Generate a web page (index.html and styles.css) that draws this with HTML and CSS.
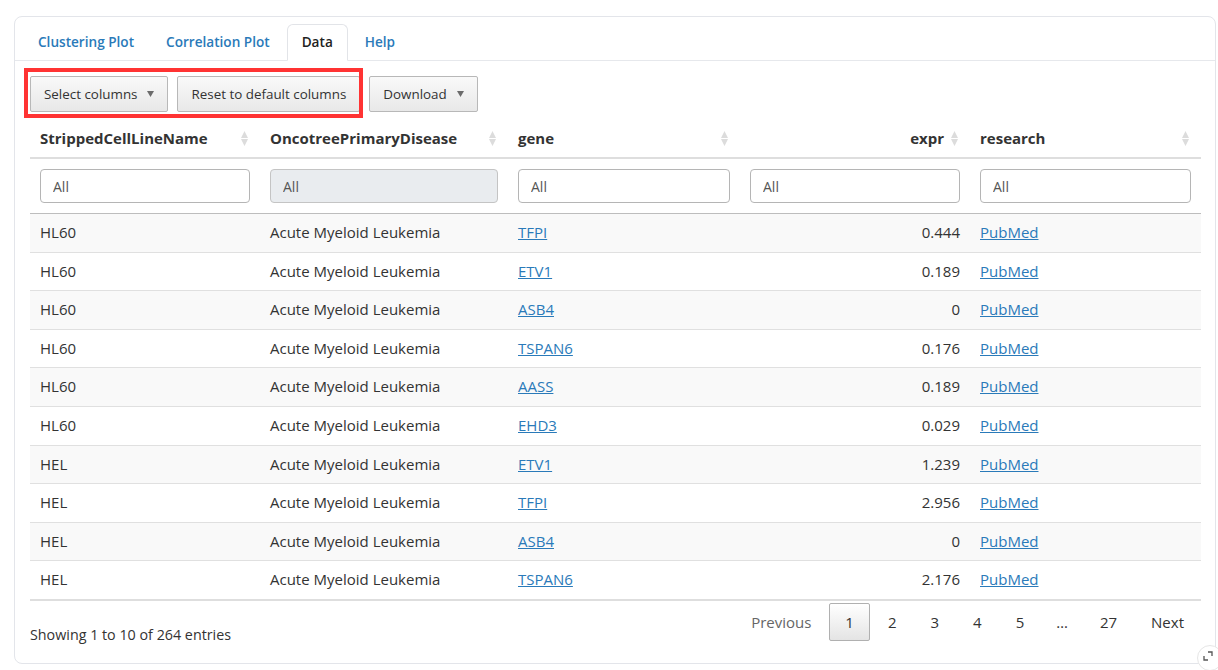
FILE: index.html
```html
<!DOCTYPE html>
<html lang="en">
<head>
<meta charset="utf-8">
<title>Data</title>
<link rel="stylesheet" href="styles.css">
</head>
<body>
<div class="card">
  <div class="card-header">
    <ul class="tabs">
      <li class="tab"><a>Clustering Plot</a></li>
      <li class="tab"><a>Correlation Plot</a></li>
      <li class="tab active"><a>Data</a></li>
      <li class="tab"><a>Help</a></li>
    </ul>
  </div>
  <div class="card-body">
    <div class="toolbar">
      <button class="btn">Select columns <svg class="caret" viewBox="0 0 7 6"><path d="M0 0 H7 L3.5 6 Z"/></svg></button>
      <button class="btn">Reset to default columns</button>
      <button class="btn">Download <svg class="caret" viewBox="0 0 7 6"><path d="M0 0 H7 L3.5 6 Z"/></svg></button>
      <div class="highlight"></div>
    </div>
    <table class="dt">
      <colgroup>
        <col class="c1"><col class="c2"><col class="c3"><col class="c4"><col class="c5">
      </colgroup>
      <thead>
        <tr class="head">
          <th><div class="th"><span class="lbl">StrippedCellLineName</span><svg class="sort" viewBox="0 0 7 15"><path d="M3.5 0 L7 7 L0 7 Z M3.5 15 L7 8 L0 8 Z"/></svg></div></th>
          <th><div class="th"><span class="lbl">OncotreePrimaryDisease</span><svg class="sort" viewBox="0 0 7 15"><path d="M3.5 0 L7 7 L0 7 Z M3.5 15 L7 8 L0 8 Z"/></svg></div></th>
          <th><div class="th"><span class="lbl">gene</span><svg class="sort" viewBox="0 0 7 15"><path d="M3.5 0 L7 7 L0 7 Z M3.5 15 L7 8 L0 8 Z"/></svg></div></th>
          <th><div class="th right"><span class="lbl">expr</span><svg class="sort" viewBox="0 0 7 15"><path d="M3.5 0 L7 7 L0 7 Z M3.5 15 L7 8 L0 8 Z"/></svg></div></th>
          <th><div class="th"><span class="lbl">research</span><svg class="sort" viewBox="0 0 7 15"><path d="M3.5 0 L7 7 L0 7 Z M3.5 15 L7 8 L0 8 Z"/></svg></div></th>
        </tr>
        <tr class="filters">
          <td><input class="filter" placeholder="All"></td>
          <td><input class="filter" placeholder="All" disabled></td>
          <td><input class="filter" placeholder="All"></td>
          <td><input class="filter" placeholder="All"></td>
          <td><input class="filter" placeholder="All"></td>
        </tr>
      </thead>
      <tbody>
        <tr><td>HL60</td><td>Acute Myeloid Leukemia</td><td><a class="link">TFPI</a></td><td class="num">0.444</td><td><a class="link">PubMed</a></td></tr>
        <tr><td>HL60</td><td>Acute Myeloid Leukemia</td><td><a class="link">ETV1</a></td><td class="num">0.189</td><td><a class="link">PubMed</a></td></tr>
        <tr><td>HL60</td><td>Acute Myeloid Leukemia</td><td><a class="link">ASB4</a></td><td class="num">0</td><td><a class="link">PubMed</a></td></tr>
        <tr><td>HL60</td><td>Acute Myeloid Leukemia</td><td><a class="link">TSPAN6</a></td><td class="num">0.176</td><td><a class="link">PubMed</a></td></tr>
        <tr><td>HL60</td><td>Acute Myeloid Leukemia</td><td><a class="link">AASS</a></td><td class="num">0.189</td><td><a class="link">PubMed</a></td></tr>
        <tr><td>HL60</td><td>Acute Myeloid Leukemia</td><td><a class="link">EHD3</a></td><td class="num">0.029</td><td><a class="link">PubMed</a></td></tr>
        <tr><td>HEL</td><td>Acute Myeloid Leukemia</td><td><a class="link">ETV1</a></td><td class="num">1.239</td><td><a class="link">PubMed</a></td></tr>
        <tr><td>HEL</td><td>Acute Myeloid Leukemia</td><td><a class="link">TFPI</a></td><td class="num">2.956</td><td><a class="link">PubMed</a></td></tr>
        <tr><td>HEL</td><td>Acute Myeloid Leukemia</td><td><a class="link">ASB4</a></td><td class="num">0</td><td><a class="link">PubMed</a></td></tr>
        <tr><td>HEL</td><td>Acute Myeloid Leukemia</td><td><a class="link">TSPAN6</a></td><td class="num">2.176</td><td><a class="link">PubMed</a></td></tr>
      </tbody>
    </table>
    <div class="footer">
      <div class="info">Showing 1 to 10 of 264 entries</div>
      <div class="pager">
        <span class="pg disabled">Previous</span>
        <span class="pg current">1</span>
        <span class="pg">2</span>
        <span class="pg">3</span>
        <span class="pg">4</span>
        <span class="pg">5</span>
        <span class="ellipsis">…</span>
        <span class="pg">27</span>
        <span class="pg">Next</span>
      </div>
    </div>
  </div>
  <div class="expand">
    <svg viewBox="0 0 10 10" width="10" height="10"><path d="M1 5 V9 H5 M5 1 H9 V5" fill="none" stroke="#555" stroke-width="1.3"/></svg>
  </div>
</div>
</body>
</html>
```

FILE: styles.css
```css
html, body {
  margin: 0;
  padding: 0;
  overflow: hidden;
  background: #fff;
}
body {
  font-family: "Open Sans", "Liberation Sans", sans-serif;
  font-size: 15px;
  color: #333;
  width: 1218px;
  height: 670px;
}
.card {
  position: relative;
  margin: 16px 2px 0 14px;
  border: 1px solid #e3e5ea;
  border-radius: 8px;
  height: 648px;
  box-sizing: border-box;
}
.card-header {
  padding: 7px 8px 0;
  border-bottom: 1px solid #e6e8ec;
}
.tabs {
  list-style: none;
  margin: 0 0 -1px;
  padding: 0;
  display: flex;
}
.tab {
  margin-right: 2px;
}
.tab a {
  display: block;
  padding: 7px 14px 8px;
  line-height: 20px;
  font-size: 13.6px;
  font-weight: 600;
  color: #2a7ab9;
  border: 1px solid transparent;
  border-radius: 6px 6px 0 0;
}
.tab.active a {
  color: #222;
  background: #fff;
  border-color: #e2e4e8 #e2e4e8 #fff;
}
.card-body {
  padding: 15px 15px 15px;
}
.toolbar {
  position: relative;
  display: flex;
  gap: 9px;
  height: 36px;
  margin-bottom: 6px;
}
.btn {
  font-family: inherit;
  font-size: 13.4px;
  color: #333;
  height: 36px;
  padding: 0 13px;
  border: 1px solid #b8b8b8;
  border-radius: 2px;
  background: linear-gradient(to bottom, #f9f9f9 0%, #e8e8e8 100%);
  display: flex;
  align-items: center;
}
.caret {
  width: 7px;
  height: 6px;
  fill: #6b6b6b;
  margin-left: 10px;
}
.highlight {
  position: absolute;
  left: -6px;
  top: -8px;
  width: 339px;
  height: 50px;
  box-sizing: border-box;
  border: 4px solid #f33;
  pointer-events: none;
}
.dt {
  width: 1171px;
  border-collapse: collapse;
  table-layout: fixed;
}
.c1 { width: 230px; }
.c2 { width: 248px; }
.c3 { width: 232px; }
.c4 { width: 230px; }
.c5 { width: 231px; }
.head th {
  padding: 10px 12px 9px 10px;
  line-height: 20px;
  font-weight: 700;
  text-align: left;
  color: #333;
  border-bottom: 2px solid #dedede;
}
.th {
  display: flex;
  align-items: center;
  justify-content: space-between;
}
.th.right {
  justify-content: flex-end;
  gap: 7px;
}
.sort {
  width: 7px;
  height: 15px;
  fill: #dcdcdc;
  flex: none;
}
.filters td {
  padding: 10px 10px 10px;
  border-bottom: 1px solid #bdbdbd;
}
.filter {
  display: block;
  width: 100%;
  box-sizing: border-box;
  height: 34px;
  padding: 0 12px;
  font-family: inherit;
  font-size: 14px;
  border: 1px solid #b5b5b5;
  border-radius: 4px;
  background: #fff;
}
.filter::placeholder {
  color: #555;
}
.filter:disabled {
  background: #e9ecef;
  border-color: #c4c4c4;
}
tbody td {
  padding: 8px 10px;
  line-height: 21.6px;
  border-top: 1px solid #e0e0e0;
  white-space: nowrap;
}
tbody tr:first-child td {
  border-top: none;
}
tbody tr:nth-child(odd) td {
  background: #f9f9f9;
}
tbody tr:last-child td {
  border-bottom: 2px solid #dedede;
}
td.num {
  text-align: right;
}
.link {
  color: #2a7ab9;
  text-decoration: underline;
}
.footer {
  display: flex;
  justify-content: space-between;
  align-items: flex-start;
  padding-top: 2px;
}
.info {
  padding-top: 21px;
  line-height: 21.6px;
  font-size: 14.3px;
}
.pager {
  display: flex;
  align-items: center;
}
.pg {
  padding: 7px 15px;
  line-height: 22px;
  margin-left: 2px;
  border: 1px solid transparent;
  border-radius: 2px;
  color: #333;
}
.pg.disabled {
  color: #666;
}
.pg.current {
  border-color: #b0b0b0;
  background: linear-gradient(to bottom, #fff 0%, #e4e4e4 100%);
}
.ellipsis {
  padding: 0 14px;
  margin-left: 2px;
  color: #333;
}
.expand {
  position: absolute;
  right: -8px;
  bottom: -8px;
  width: 26px;
  height: 26px;
  border-radius: 50%;
  background: #fff;
  border: 1px solid #e6e6e6;
  display: flex;
  align-items: center;
  justify-content: center;
  box-sizing: border-box;
}
.expand svg {
  margin: 0 4px 4px 0;
}
```
